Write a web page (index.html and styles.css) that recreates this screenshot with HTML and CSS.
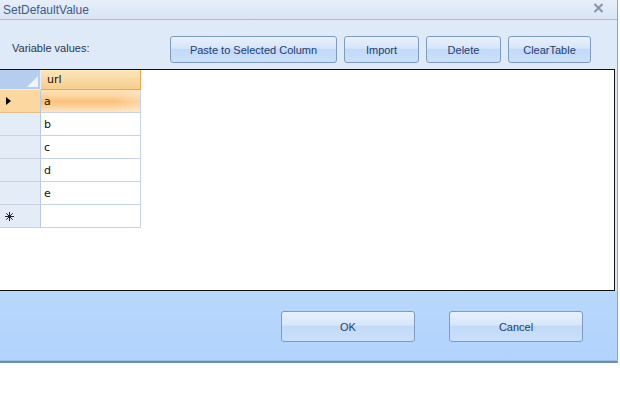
FILE: index.html
```html
<!DOCTYPE html>
<html lang="en">
<head>
    <meta charset="UTF-8">
    <title>SetDefaultValue</title>
    <link rel="stylesheet" href="styles.css">
</head>
<body>
    <div class="window">
        <div class="titlebar">
            <span class="title">SetDefaultValue</span>
            <svg class="close" width="11" height="10" viewBox="0 0 11 10">
                <path d="M1.5 1 L9.5 9 M9.5 1 L1.5 9" stroke="#8794a6" stroke-width="2"/>
            </svg>
        </div>

        <div class="toolbar">
            <span class="label">Variable values:</span>
            <div class="actions">
                <button class="btn btn-paste">Paste to Selected Column</button>
                <button class="btn btn-small">Import</button>
                <button class="btn btn-small">Delete</button>
                <button class="btn btn-clear">ClearTable</button>
            </div>
        </div>

        <div class="grid">
            <div class="table">
                <div class="corner"><span class="corner-tri"></span></div>
                <div class="col-head">url</div>

                <div class="row-head current"><span class="arrow"></span></div>
                <div class="cell selected">a</div>

                <div class="row-head"></div>
                <div class="cell">b</div>

                <div class="row-head"></div>
                <div class="cell">c</div>

                <div class="row-head"></div>
                <div class="cell">d</div>

                <div class="row-head"></div>
                <div class="cell">e</div>

                <div class="row-head">
                    <svg class="star" width="9" height="9" viewBox="0 0 9 9">
                        <path d="M4.5 0 V9 M0 4.5 H9 M1.3 1.3 L7.7 7.7 M7.7 1.3 L1.3 7.7" stroke="#222" stroke-width="1"/>
                    </svg>
                </div>
                <div class="cell"></div>
            </div>
        </div>

        <div class="footer">
            <button class="btn btn-big">OK</button>
            <button class="btn btn-big">Cancel</button>
        </div>
    </div>
</body>
</html>
```

FILE: styles.css
```css
body {
    margin: 0;
    background: #ffffff;
    font-family: "Liberation Sans", Arial, sans-serif;
}
.window {
    width: 618px;
    box-sizing: border-box;
    border-right: 1px solid #8aa6cb;
    border-bottom: 2px solid #6e8db6;
    background: #dbe7f6;
    display: flex;
    flex-direction: column;
}
.titlebar {
    height: 19px;
    border-bottom: 1px solid #a7bedb;
    background: linear-gradient(to bottom, #e6eef9, #d9e5f4);
    display: flex;
    align-items: center;
    justify-content: space-between;
    padding: 0 13px 0 3px;
}
.title {
    font-size: 12px;
    color: #3d5b86;
}
.close {
    margin-top: -4px;
}
.toolbar {
    height: 49px;
    box-sizing: border-box;
    padding: 16px 24px 0 12px;
    display: flex;
    justify-content: space-between;
    background: #dfeaf8;
    border-right: 2px solid #dfeaf8;
}
.label {
    font-size: 11px;
    color: #2a3648;
    margin-top: 6px;
}
.actions {
    display: flex;
    gap: 7px;
}
.btn {
    height: 27px;
    border: 1px solid #7f9cc0;
    border-radius: 3px;
    background: linear-gradient(to bottom, #e7f1fd 0%, #d6e6fb 45%, #c2daf8 50%, #cae0fa 100%);
    color: #22406e;
    font-family: "Liberation Sans", Arial, sans-serif;
    font-size: 11px;
    padding: 0;
}
.btn-paste { width: 167px; }
.btn-small { width: 75px; }
.btn-clear { width: 83px; }
.grid {
    height: 222px;
    box-sizing: border-box;
    background: #ffffff;
    border-top: 1px solid #111;
    border-bottom: 1px solid #111;
    margin-right: 2px;
    border-right: 1px solid #111;
}
.table {
    display: grid;
    grid-template-columns: 41px 100px;
    grid-template-rows: 20px;
    grid-auto-rows: 23px;
    width: 141px;
    font-family: "DejaVu Sans", Verdana, sans-serif;
    font-size: 11px;
    color: #111;
}
.corner {
    background: #b5cdee;
    border-right: 1px solid #e9eef6;
    border-bottom: 1px solid #e9eef6;
    position: relative;
}
.corner-tri {
    position: absolute;
    right: 2px;
    bottom: 2px;
    width: 0;
    height: 0;
    border-left: 11px solid transparent;
    border-bottom: 11px solid #f1f5fb;
}
.col-head {
    background: linear-gradient(to bottom, #fbe6bd, #f6cd8c);
    border-right: 1px solid #e7a75a;
    border-bottom: 1px solid #e7a75a;
    padding-left: 6px;
    line-height: 19px;
}
.row-head {
    background: #e4ecf7;
    border-right: 1px solid #b9c9de;
    border-bottom: 1px solid #c6d3e4;
    display: flex;
    align-items: center;
    padding-left: 5px;
}
.row-head.current {
    background: #fad89f;
    border-bottom-color: #e2bf86;
}
.arrow {
    width: 0;
    height: 0;
    border-top: 4px solid transparent;
    border-bottom: 4px solid transparent;
    border-left: 5px solid #000;
    margin-left: 1px;
}
.cell {
    border-right: 1px solid #c6d3e4;
    border-bottom: 1px solid #c6d3e4;
    padding: 1px 0 0 3px;
    line-height: 21px;
}
.cell.selected {
    background:
        linear-gradient(to right, rgba(255, 255, 255, 0) 75%, rgba(255, 240, 215, 0.4)),
        linear-gradient(to bottom, #fee1b6 0%, #fdd39b 30%, #fac27a 52%, #fcd29c 75%, #fee6c4 100%);
}
.footer {
    height: 70px;
    box-sizing: border-box;
    background: linear-gradient(to bottom, #b8d7fd, #b2d3fc);
    border-bottom: 1px solid #9fbde3;
    border-right: 2px solid #b6d5fc;
    display: flex;
    justify-content: flex-end;
    align-items: flex-start;
    gap: 34px;
    padding: 20px 32px 0 0;
}
.btn-big {
    width: 134px;
    height: 31px;
}
```
